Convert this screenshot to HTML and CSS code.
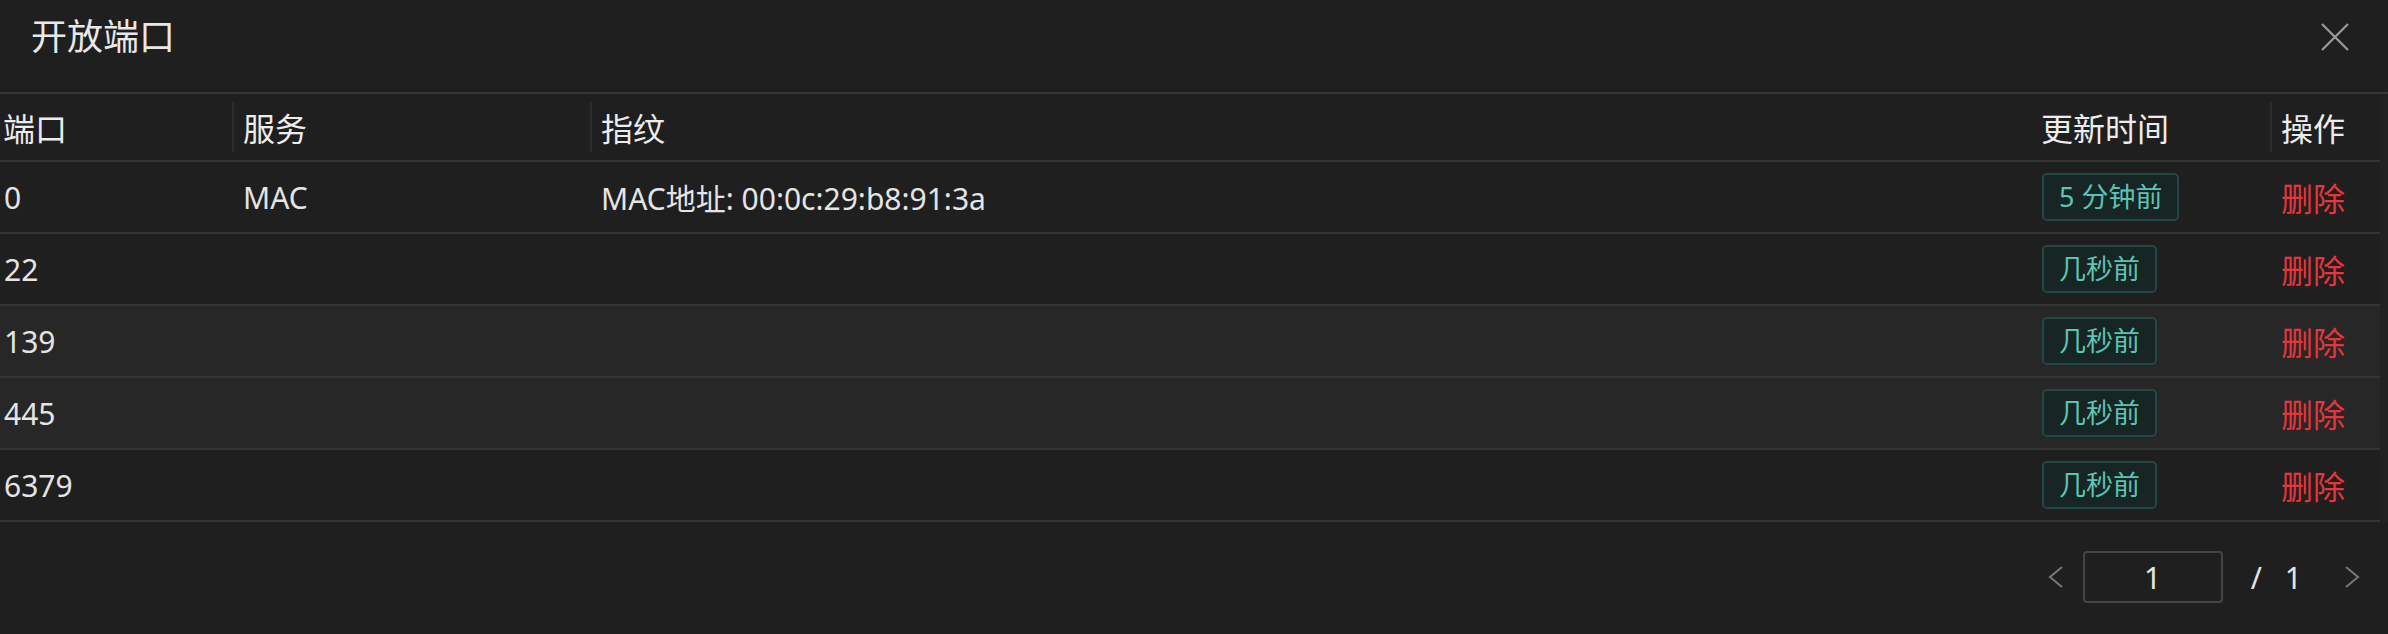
FILE: index.html
```html
<!DOCTYPE html>
<html lang="zh-CN">
<head>
<meta charset="utf-8">
<title>开放端口</title>
<link rel="stylesheet" href="styles.css">
</head>
<body>
<div class="modal">
  <div class="modal-header">
    <div class="modal-title">开放端口</div>
    <div class="modal-close">
      <svg width="28" height="28" viewBox="0 0 28 28"><path d="M1 1L27 27M27 1L1 27" stroke="#9a9a9a" stroke-width="2.2" fill="none"/></svg>
    </div>
  </div>
  <div class="table-wrap">
    <table class="ports">
      <colgroup>
        <col class="c-port"><col class="c-svc"><col class="c-fp"><col class="c-time"><col class="c-op">
      </colgroup>
      <thead>
        <tr>
          <th class="first"><div class="th-in">端口</div></th>
          <th><div class="th-in div">服务</div></th>
          <th><div class="th-in div">指纹</div></th>
          <th><div class="th-in tight">更新时间</div></th>
          <th><div class="th-in div">操作</div></th>
        </tr>
      </thead>
      <tbody>
        <tr>
          <td class="first">0</td><td>MAC</td><td>MAC地址: 00:0c:29:b8:91:3a</td>
          <td><span class="tag">5 分钟前</span></td><td><span class="del">删除</span></td>
        </tr>
        <tr>
          <td class="first">22</td><td></td><td></td>
          <td><span class="tag">几秒前</span></td><td><span class="del">删除</span></td>
        </tr>
        <tr class="lite">
          <td class="first">139</td><td></td><td></td>
          <td><span class="tag">几秒前</span></td><td><span class="del">删除</span></td>
        </tr>
        <tr class="lite">
          <td class="first">445</td><td></td><td></td>
          <td><span class="tag">几秒前</span></td><td><span class="del">删除</span></td>
        </tr>
        <tr>
          <td class="first">6379</td><td></td><td></td>
          <td><span class="tag">几秒前</span></td><td><span class="del">删除</span></td>
        </tr>
      </tbody>
    </table>
    <div class="scroll-strip"></div>
  </div>
  <div class="pager">
    <span class="arrow">
      <svg width="16" height="22" viewBox="0 0 16 22"><path d="M14 1L2 11L14 21" stroke="#777" stroke-width="2" fill="none"/></svg>
    </span>
    <div class="page-input">1</div>
    <span class="page-total"><span class="slash">/</span><span>1</span></span>
    <span class="arrow">
      <svg width="16" height="22" viewBox="0 0 16 22"><path d="M2 1L14 11L2 21" stroke="#777" stroke-width="2" fill="none"/></svg>
    </span>
  </div>
</div>
</body>
</html>
```

FILE: styles.css
```css
html, body {
  margin: 0;
  padding: 0;
  background: #1f1f1f;
}
body {
  width: 2388px;
  height: 634px;
  overflow: hidden;
  font-family: "Noto Sans", "Noto Sans CJK SC", sans-serif;
  color: #e4e4e4;
}
.modal {
  display: flex;
  flex-direction: column;
  height: 634px;
}
.modal-header {
  height: 92px;
  border-bottom: 2px solid #353535;
  display: flex;
  align-items: flex-start;
  justify-content: space-between;
}
.modal-title {
  font-family: "Noto Sans CJK SC", sans-serif;
  font-size: 36px;
  line-height: 36px;
  padding: 16px 0 0 31px;
  color: #e8e8e8;
}
.modal-close {
  padding: 23px 39px 0 0;
  line-height: 0;
}
.table-wrap {
  display: flex;
}
.ports {
  width: 2380px;
  border-collapse: collapse;
  table-layout: fixed;
  font-size: 30px;
}
.c-port { width: 232px; }
.c-svc { width: 358px; }
.c-fp { width: 1441px; }
.c-time { width: 239px; }
.c-op { width: 110px; }
.scroll-strip {
  flex: 1;
  background: #222222;
}
.ports th {
  height: 66px;
  padding: 0;
  text-align: left;
  font-weight: normal;
  font-family: "Noto Sans CJK SC", sans-serif;
  font-size: 32px;
  color: #ececec;
  border-bottom: 2px solid #353535;
}
.th-in {
  height: 50px;
  display: flex;
  align-items: center;
  padding-left: 11px;
  border-left: 2px solid transparent;
}
.th-in.tight {
  padding-left: 8px;
}
.th-in.div {
  border-left-color: #2c2c2c;
  padding-left: 9px;
}
.ports th.first .th-in {
  padding-left: 3px;
  border-left: 0;
}
.ports td {
  height: 70px;
  padding: 0 0 0 11px;
  border-bottom: 2px solid #353535;
  white-space: nowrap;
  color: #e4e4e4;
}
.ports td.first {
  padding-left: 4px;
}
.ports tr.lite td {
  background: #272727;
}
.tag {
  display: inline-block;
  font-family: "Noto Sans", "Noto Sans CJK SC", sans-serif;
  font-size: 27px;
  line-height: 44px;
  padding: 0 15px;
  color: #5cc4b4;
  background: #172524;
  border: 2px solid #234744;
  border-radius: 5px;
}
.del {
  font-family: "Noto Sans CJK SC", sans-serif;
  font-size: 32px;
  color: #e5363b;
}
.pager {
  flex: 1;
  display: flex;
  align-items: center;
  justify-content: flex-end;
  padding-right: 28px;
  padding-bottom: 2px;
}
.arrow {
  line-height: 0;
}
.page-input {
  width: 136px;
  height: 48px;
  margin: 0 28px 0 19px;
  border: 2px solid #444;
  border-radius: 4px;
  display: flex;
  align-items: center;
  justify-content: center;
  font-size: 30px;
  color: #e4e4e4;
}
.page-total {
  font-size: 30px;
  color: #e4e4e4;
  display: flex;
  gap: 23px;
  margin-right: 42px;
}
```
